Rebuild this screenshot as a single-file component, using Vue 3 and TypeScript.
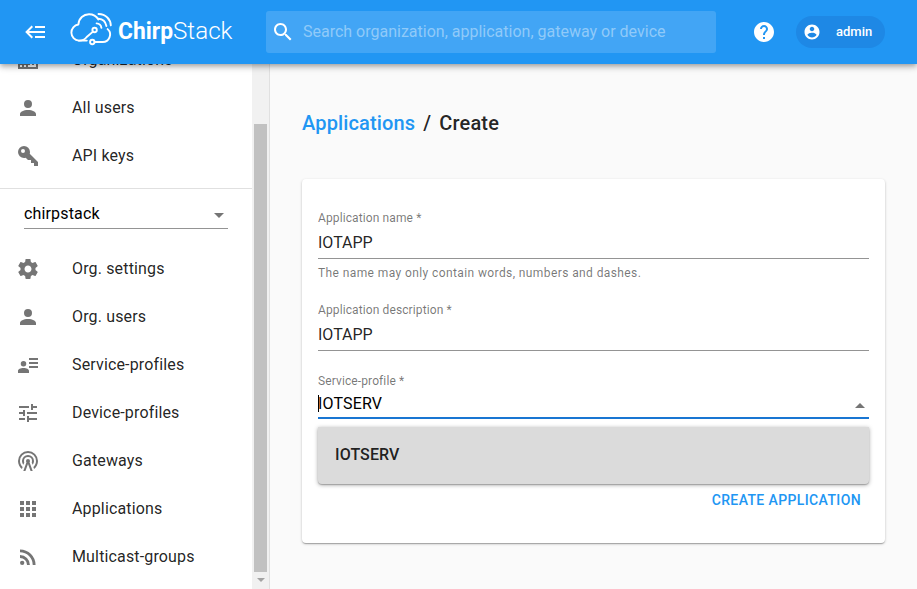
<script setup lang="ts">
import { ref } from 'vue'

interface NavItem {
  label: string
  icon: string
}

const icons = {
  domain:
    'M12 7V3H2v18h20V7H12zM6 19H4v-2h2v2zm0-4H4v-2h2v2zm0-4H4V9h2v2zm0-4H4V5h2v2zm4 12H8v-2h2v2zm0-4H8v-2h2v2zm0-4H8V9h2v2zm0-4H8V5h2v2zm10 12h-8v-2h2v-2h-2v-2h2v-2h-2V9h8v10zm-2-8h-2v2h2v-2zm0 4h-2v2h2v-2z',
  account:
    'M12 4a4 4 0 1 1 0 8 4 4 0 0 1 0-8M12 14c4.42 0 8 1.79 8 4v2H4v-2c0-2.21 3.58-4 8-4z',
  key: 'M22 18v4h-4v-3h-3v-3h-3l-2.26-2.26C9.19 13.91 8.61 14 8 14A6 6 0 1 1 14 8c0 .61-.09 1.19-.26 1.74L22 18M7 5a2 2 0 0 0 0 4 2 2 0 0 0 0-4z',
  cog: 'M19.43 12.98c.04-.32.07-.64.07-.98s-.03-.66-.07-.98l2.11-1.65c.19-.15.24-.42.12-.64l-2-3.46c-.12-.22-.39-.3-.61-.22l-2.49 1c-.52-.4-1.08-.73-1.69-.98l-.38-2.65C14.46 2.18 14.25 2 14 2h-4c-.25 0-.46.18-.49.42l-.38 2.65c-.61.25-1.17.59-1.69.98l-2.49-1c-.23-.09-.49 0-.61.22l-2 3.46c-.13.22-.07.49.12.64l2.11 1.65c-.04.32-.07.65-.07.98s.03.66.07.98l-2.11 1.65c-.19.15-.24.42-.12.64l2 3.46c.12.22.39.3.61.22l2.49-1c.52.4 1.08.73 1.69.98l.38 2.65c.03.24.24.42.49.42h4c.25 0 .46-.18.49-.42l.38-2.65c.61-.25 1.17-.59 1.69-.98l2.49 1c.23.09.49 0 .61-.22l2-3.46c.12-.22.07-.49-.12-.64l-2.11-1.65zM12 15.5c-1.93 0-3.5-1.57-3.5-3.5s1.57-3.5 3.5-3.5 3.5 1.57 3.5 3.5-1.57 3.5-3.5 3.5z',
  details:
    'M13 5h9v2h-9zM13 9h9v2h-9zM13 13h9v2h-9zM7.5 8a2.75 2.75 0 1 1 0 5.5 2.75 2.75 0 0 1 0-5.5M7.5 15c3.04 0 5.5 1.23 5.5 2.75V20H2v-2.25C2 16.23 4.46 15 7.5 15z',
  tune: 'M3 17v2h6v-2H3zM3 5v2h10V5H3zm10 16v-2h8v-2h-8v-2h-2v6h2zM7 9v2H3v2h4v2h2V9H7zm14 4v-2H11v2h10zm-6-4h2V7h4V5h-4V3h-2v6z',
  tower:
    'M12 10A2 2 0 0 1 14 12C14 12.5 13.82 12.94 13.53 13.29L16.7 22H14.57L12 14.93L9.43 22H7.3L10.47 13.29C10.18 12.94 10 12.5 10 12A2 2 0 0 1 12 10M12 8A4 4 0 0 0 8 12C8 12.5 8.1 13 8.28 13.46L7.4 15.86C6.53 14.81 6 13.47 6 12A6 6 0 0 1 12 6A6 6 0 0 1 18 12C18 13.47 17.47 14.81 16.6 15.86L15.72 13.46C15.9 13 16 12.5 16 12A4 4 0 0 0 12 8M12 4A8 8 0 0 0 4 12C4 14.36 5 16.5 6.64 17.94L5.92 19.94C3.54 18.11 2 15.23 2 12A10 10 0 0 1 12 2A10 10 0 0 1 22 12C22 15.23 20.46 18.11 18.08 19.94L17.36 17.94C19 16.5 20 14.36 20 12A8 8 0 0 0 12 4Z',
  apps: 'M4 8h4V4H4v4zm6 12h4v-4h-4v4zm-6 0h4v-4H4v4zm0-6h4v-4H4v4zm6 0h4v-4h-4v4zm6-10v4h4V4h-4zm-6 4h4V4h-4v4zm6 6h4v-4h-4v4zm0 6h4v-4h-4v4z',
  rss: 'M6.18 15.64A2.18 2.18 0 1 1 6.18 20A2.18 2.18 0 0 1 6.18 15.64M4 4.44A15.56 15.56 0 0 1 19.56 20H16.73A12.73 12.73 0 0 0 4 7.27V4.44M4 10.1A9.9 9.9 0 0 1 13.9 20H11.07A7.07 7.07 0 0 0 4 12.93V10.1Z',
  back: 'M5 13L9 17L7.6 18.42L1.18 12L7.6 5.58L9 7L5 11H21V13H5M21 6V8H11V6H21M21 16V18H11V16H21Z',
  search:
    'M15.5 14h-.79l-.28-.27C15.41 12.59 16 11.11 16 9.5 16 5.91 13.09 3 9.5 3S3 5.91 3 9.5 5.91 16 9.5 16c1.61 0 3.09-.59 4.23-1.57l.27.28v.79l5 4.99L20.49 19l-4.99-5zm-6 0C7.01 14 5 11.99 5 9.5S7.01 5 9.5 5 14 7.01 14 9.5 11.99 14 9.5 14z',
  help: 'M12 2C6.48 2 2 6.48 2 12s4.48 10 10 10 10-4.48 10-10S17.52 2 12 2zm1 17h-2v-2h2v2zm2.07-7.75l-.9.92C13.45 12.9 13 13.5 13 15h-2v-.5c0-1.1.45-2.1 1.17-2.83l1.24-1.26c.37-.36.59-.86.59-1.41 0-1.1-.9-2-2-2s-2 .9-2 2H8c0-2.21 1.79-4 4-4s4 1.79 4 4c0 .88-.36 1.68-.93 2.25z',
  user: 'M12 2C6.48 2 2 6.48 2 12s4.48 10 10 10 10-4.48 10-10S17.52 2 12 2zm0 3c1.66 0 3 1.34 3 3s-1.34 3-3 3-3-1.34-3-3 1.34-3 3-3zm0 14.2c-2.5 0-4.71-1.28-6-3.22.03-1.99 4-3.08 6-3.08 1.99 0 5.97 1.09 6 3.08-1.29 1.94-3.5 3.22-6 3.22z',
}

const globalNav: NavItem[] = [
  { label: 'Organizations', icon: icons.domain },
  { label: 'All users', icon: icons.account },
  { label: 'API keys', icon: icons.key },
]

const orgNav: NavItem[] = [
  { label: 'Org. settings', icon: icons.cog },
  { label: 'Org. users', icon: icons.account },
  { label: 'Service-profiles', icon: icons.details },
  { label: 'Device-profiles', icon: icons.tune },
  { label: 'Gateways', icon: icons.tower },
  { label: 'Applications', icon: icons.apps },
  { label: 'Multicast-groups', icon: icons.rss },
]

const organization = ref('chirpstack')
const name = ref('IOTAPP')
const description = ref('IOTAPP')
const profile = ref('IOTSERV')
const options = ['IOTSERV']
</script>

<template>
  <div class="shell">
    <header class="bar">
      <svg class="icon back" viewBox="0 0 24 24"><path :d="icons.back" /></svg>
      <svg class="logo" viewBox="0 0 166 40">
        <g class="cloud">
          <path d="M16.8 28.6H8.8A8.1 8.1 0 0 1 8.4 12.5C8.8 6.2 13.5 2.2 19 2.2C23 2.2 26.4 4 28.4 7.4" />
          <path d="M24.5 30H32.4A7.4 7.4 0 0 0 37.6 17.1" />
          <path d="M8.8 28.6C12.9 28.8 14.8 27.5 16.7 25L23 19.6" />
          <circle cx="24.6" cy="18" r="2.2" />
          <circle cx="22.3" cy="30" r="2.2" />
          <path d="M26.6 11.4C29.4 11.6 31 13.2 31.4 15.8" />
          <path d="M28.5 2C35.8 2.2 40.6 7.2 40.8 13.4" />
          <path d="M28.6 6.8C33 7.2 35.6 10 36.4 14" />
        </g>
        <text class="word strong" x="48" y="26.7" textLength="55" lengthAdjust="spacingAndGlyphs">Chirp</text>
        <text class="word thin" x="103" y="26.7" textLength="59.5" lengthAdjust="spacingAndGlyphs">Stack</text>
      </svg>
      <div class="search">
        <svg class="icon" viewBox="0 0 24 24"><path :d="icons.search" /></svg>
        <span class="hint">Search organization, application, gateway or device</span>
      </div>
      <svg class="icon help" viewBox="0 0 24 24"><path :d="icons.help" /></svg>
      <div class="chip">
        <svg class="avatar" viewBox="0 0 24 24"><path :d="icons.user" /></svg>
        <span>admin</span>
      </div>
    </header>

    <div class="body">
      <aside class="drawer">
        <nav class="menu">
          <ul class="list top">
            <li v-for="item in globalNav" :key="item.label" class="item">
              <svg class="icon" viewBox="0 0 24 24"><path fill-rule="evenodd" :d="item.icon" /></svg>
              <span>{{ item.label }}</span>
            </li>
          </ul>
          <div class="org">
            <div class="org-select">
              <span>{{ organization }}</span>
              <svg class="icon" viewBox="0 0 24 24"><path d="M7 10l5 5 5-5z" /></svg>
            </div>
          </div>
          <ul class="list">
            <li v-for="item in orgNav" :key="item.label" class="item">
              <svg class="icon" viewBox="0 0 24 24"><path :d="item.icon" /></svg>
              <span>{{ item.label }}</span>
            </li>
          </ul>
        </nav>
        <div class="scrollbar">
          <div class="thumb"></div>
          <div class="down"><svg viewBox="0 0 8 4"><path d="M0 0h8L4 4z" /></svg></div>
        </div>
      </aside>

      <main class="content">
        <h1 class="title"><a>Applications</a><span class="slash">/</span><span>Create</span></h1>
        <section class="card">
          <div class="field">
            <label>Application name *</label>
            <div class="value">{{ name }}</div>
            <p class="help-text">The name may only contain words, numbers and dashes.</p>
          </div>
          <div class="field second">
            <label>Application description *</label>
            <div class="value">{{ description }}</div>
          </div>
          <div class="field third">
            <label>Service-profile *</label>
            <div class="value focused">
              <span class="caret"></span>
              <span class="picked">{{ profile }}</span>
              <svg class="icon" viewBox="0 0 24 24"><path d="M7 14l5-5 5 5z" /></svg>
            </div>
            <div class="options">
              <div v-for="option in options" :key="option" class="option">{{ option }}</div>
            </div>
          </div>
          <div class="actions"><button type="button">Create application</button></div>
        </section>
      </main>
    </div>
  </div>
</template>

<style>
body {
  background: #fafafa;
  overflow: hidden;
}
</style>

<style scoped>
.shell {
  height: 589px;
  display: flex;
  flex-direction: column;
  overflow: hidden;
  font-family: Roboto, 'Liberation Sans', sans-serif;
  font-size: 16px;
  letter-spacing: 0.15px;
  color: rgba(0, 0, 0, 0.87);
}
.icon {
  width: 24px;
  height: 24px;
  flex: none;
  fill: currentColor;
}
.bar {
  position: relative;
  z-index: 2;
  flex: none;
  box-sizing: border-box;
  height: 64px;
  padding-left: 24px;
  display: flex;
  align-items: center;
  background: #2196f3;
  color: #fff;
  box-shadow: 0 2px 4px -1px rgba(0, 0, 0, 0.2), 0 4px 5px rgba(0, 0, 0, 0.14), 0 1px 10px rgba(0, 0, 0, 0.12);
}
.logo {
  width: 166px;
  height: 40px;
  margin-left: 22px;
  flex: none;
}
.cloud {
  fill: none;
  stroke: #fff;
  stroke-width: 1.9;
  stroke-linecap: round;
  stroke-linejoin: round;
}
.word {
  font-size: 24px;
  letter-spacing: 0;
  fill: #fff;
}
.strong {
  font-weight: 700;
}
.thin {
  font-weight: 300;
}
.search {
  box-sizing: border-box;
  width: 450px;
  height: 42px;
  margin-left: 30px;
  padding-left: 5px;
  display: flex;
  align-items: center;
  border-radius: 3px;
  background: #42a5f5;
}
.hint {
  margin-left: 8px;
  padding-bottom: 2px;
  letter-spacing: 0;
  color: #90caf9;
}
.help {
  margin-left: 36px;
}
.chip {
  box-sizing: border-box;
  width: 89px;
  height: 32px;
  margin-left: 20px;
  padding-left: 7px;
  display: flex;
  align-items: center;
  border-radius: 16px;
  background: #1e88e5;
  font-size: 13px;
  font-weight: 500;
  letter-spacing: 0;
}
.chip span {
  padding-bottom: 1px;
}
.avatar {
  width: 18px;
  height: 18px;
  margin-right: 15px;
  fill: #fff;
}
.body {
  flex: 1;
  min-height: 0;
  display: flex;
}
.drawer {
  box-sizing: border-box;
  width: 270px;
  flex: none;
  display: flex;
  overflow: hidden;
  background: #fff;
  border-right: 1px solid #e0e0e0;
}
.menu {
  width: 252px;
}
.list {
  margin: 0;
  padding: 0;
  list-style: none;
}
.top {
  margin-top: -28px;
  padding-bottom: 8px;
  border-bottom: 1px solid #e0e0e0;
}
.item {
  height: 48px;
  padding-left: 16px;
  display: flex;
  align-items: center;
}
.item span {
  margin-left: 32px;
  line-height: 24px;
}
.item .icon,
.org .icon {
  color: #757575;
}
.org {
  padding: 8px 24px 16px;
}
.org-select {
  height: 31px;
  display: flex;
  align-items: center;
  justify-content: space-between;
  border-bottom: 1px solid #949494;
}
.org-select span {
  padding-top: 2px;
  color: #000;
}
.org-select .icon {
  margin: 4px -3px 0 0;
}
.scrollbar {
  width: 17px;
  display: flex;
  flex-direction: column;
  align-items: center;
  background: #f1f1f1;
}
.thumb {
  width: 13px;
  height: 448px;
  margin-top: 60px;
  background: #c1c1c1;
}
.down {
  flex: 1;
  display: flex;
  align-items: center;
}
.down svg {
  width: 8px;
  height: 4px;
  margin-bottom: 1px;
  fill: #a3a3a3;
}
.content {
  flex: 1;
  padding: 43px 32px 0;
}
.title {
  margin: 0;
  display: flex;
  font-size: 20px;
  font-weight: 500;
  line-height: 32px;
  letter-spacing: 0.15px;
}
.title a {
  color: #2196f3;
}
.slash {
  margin: 0 8px;
}
.card {
  box-sizing: border-box;
  height: 364px;
  margin-top: 40px;
  padding: 31px 16px 0;
  border-radius: 4px;
  background: #fff;
  box-shadow: 0 1px 3px rgba(0, 0, 0, 0.2), 0 1px 1px rgba(0, 0, 0, 0.14), 0 2px 1px -1px rgba(0, 0, 0, 0.12);
}
.field {
  position: relative;
}
.field label {
  display: block;
  font-size: 12px;
  line-height: 16px;
  letter-spacing: 0.11px;
  color: rgba(0, 0, 0, 0.54);
}
.value {
  box-sizing: border-box;
  height: 33px;
  line-height: 33px;
  letter-spacing: 0;
  border-bottom: 1px solid #949494;
}
.help-text {
  margin: 6px 0 0;
  font-size: 12px;
  line-height: 16px;
  letter-spacing: 0.4px;
  color: rgba(0, 0, 0, 0.54);
}
.second {
  margin-top: 21px;
}
.third {
  margin-top: 22px;
}
.focused {
  height: 30px;
  line-height: 30px;
  display: flex;
  align-items: center;
  letter-spacing: 0.15px;
  border-bottom: 2px solid #1976d2;
  color: #000;
}
.caret {
  width: 1px;
  height: 17px;
  margin-right: -1px;
  background: #000;
}
.picked {
  flex: 1;
  padding-top: 2px;
}
.focused .icon {
  margin: 5px -3px 0 0;
  color: #757575;
}
.options {
  position: absolute;
  top: 54px;
  left: 0;
  right: 0;
  height: 57px;
  background: #dbdbdb;
  border-radius: 0 0 4px 4px;
  box-shadow: 0 1px 4px rgba(0, 0, 0, 0.35), 0 1px 1px rgba(0, 0, 0, 0.2);
}
.option {
  padding-left: 17px;
  line-height: 55px;
  font-weight: 500;
  letter-spacing: 0.1px;
}
.actions {
  display: flex;
  justify-content: flex-end;
  margin-top: 63px;
}
.actions button {
  height: 36px;
  padding: 0 8px;
  border: 0;
  background: none;
  font: 500 14px/36px Roboto, 'Liberation Sans', sans-serif;
  letter-spacing: 0.38px;
  text-transform: uppercase;
  color: #2196f3;
}
</style>
